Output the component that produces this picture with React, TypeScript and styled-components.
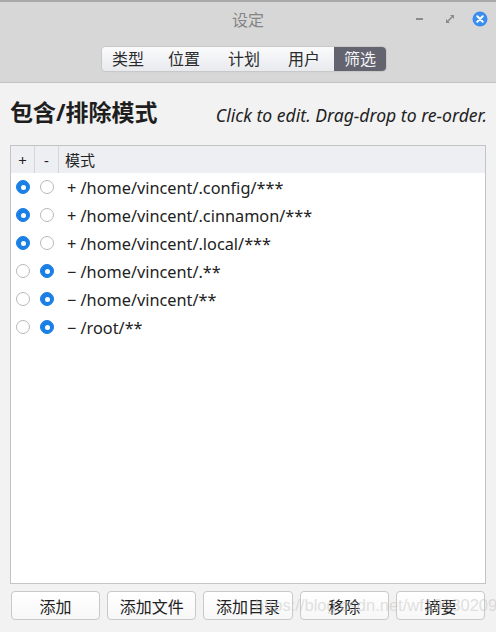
import React from "react";
import styled, { createGlobalStyle } from "styled-components";

const Global = createGlobalStyle`
  html, body { margin: 0; padding: 0; }
  body {
    width: 496px; height: 632px; overflow: hidden;
    font-family: "Noto Sans", "Noto Sans CJK SC", sans-serif;
    background: #f2f2f2;
  }
`;

const Window = styled.div`
  width: 496px; height: 632px; display: flex; flex-direction: column;
  background: #f2f2f2; position: relative; overflow: hidden;
`;

const Header = styled.div`
  background: #d7d7d7;
  border-top: 2px solid #a9a9a9;
  border-bottom: 1px solid #c4c4c4;
  display: flex; flex-direction: column;
`;

const TitleBar = styled.div`
  height: 34px; display: grid; grid-template-columns: 1fr auto 1fr; align-items: center;
`;

const Title = styled.div`
  grid-column: 2; font-size: 16px; color: #858585; margin-top: -1px;
`;

const Controls = styled.div`
  grid-column: 3; justify-self: end; display: flex; align-items: center; gap: 14px; padding-right: 8px;
`;

const CtrlBtn = styled.span`
  width: 16px; height: 16px; display: flex; align-items: center; justify-content: center;
`;

const ToolRow = styled.div`
  height: 46px; display: flex; justify-content: center; align-items: flex-start; padding-top: 11px;
  padding-right: 8px; box-sizing: border-box;
`;

const Segmented = styled.div`
  display: flex; height: 24px; border-radius: 4px; overflow: hidden;
  background: linear-gradient(#fbfbfc, #e8eaee);
  box-shadow: 0 0 0 1px #c8c8c8, 0 1px 1px rgba(0,0,0,0.08);
`;

const Seg = styled.div<{ $active?: boolean; $w: number }>`
  width: ${(p) => p.$w}px; display: flex; align-items: center; justify-content: center;
  font-size: 16px; line-height: 1;
  color: ${(p) => (p.$active ? "#f4f4f6" : "#2b2b2b")};
  background: ${(p) => (p.$active ? "#636470" : "transparent")};
`;

const Content = styled.div`
  flex: 1; display: flex; flex-direction: column; padding: 0 10px 0 10px; min-height: 0;
`;

const HeadRow = styled.div`
  height: 62px; display: flex; align-items: center; justify-content: space-between;
`;

const H1 = styled.div`
  font-size: 23px; font-weight: 700; color: #1e1e1e; margin-top: -6px;
`;

const Hint = styled.div`
  font-style: italic; font-size: 17.6px; color: #222; margin-top: 2px; margin-right: -1px;
`;

const Table = styled.div`
  flex: 1; border: 1px solid #c4c4c4; background: #fff; display: flex; flex-direction: column;
`;

const THead = styled.div`
  display: grid; grid-template-columns: 24px 24px 1fr; height: 27px; background: #eeeff3;
`;

const TH = styled.div<{ $center?: boolean; $sep?: boolean }>`
  display: flex; align-items: center; justify-content: ${(p) => (p.$center ? "center" : "flex-start")};
  padding-left: ${(p) => (p.$center ? 0 : 6)}px;
  border-right: ${(p) => (p.$sep ? "1px solid #d6d6d8" : "none")};
  font-size: 15px; color: #222;
`;

const Row = styled.div`
  display: grid; grid-template-columns: 24px 24px 1fr; height: 28px; align-items: center;
`;

const RadioCell = styled.div`
  display: flex; justify-content: center; align-items: center;
`;

const Radio = styled.span<{ $on?: boolean }>`
  width: 14px; height: 14px; border-radius: 50%; box-sizing: border-box; position: relative;
  background: ${(p) => (p.$on ? "#1a7fe6" : "#fff")};
  border: 1px solid ${(p) => (p.$on ? "#1a7fe6" : "#b9b9b9")};
  &::after {
    content: ""; display: ${(p) => (p.$on ? "block" : "none")};
    position: absolute; left: 50%; top: 50%; width: 5px; height: 5px; margin: -2.5px 0 0 -2.5px;
    border-radius: 50%; background: #fff;
  }
`;

const Pattern = styled.div`
  font-size: 16.3px; color: #222; padding-left: 8px; white-space: nowrap; margin-top: 1px;
`;

const Buttons = styled.div`
  height: 48px; display: flex; gap: 7px; align-items: flex-start; padding: 7px 1px 0; box-sizing: border-box;
`;

const Btn = styled.div`
  flex: 1; height: 29px; box-sizing: border-box; border: 1px solid #c9c9c9; border-radius: 4px;
  background: linear-gradient(#ffffff, #f7f7f7);
  display: flex; align-items: center; justify-content: center; font-size: 16px; color: #222;
`;

const Watermark = styled.div`
  position: absolute; left: 255px; top: 596px; font-family: "Liberation Sans", sans-serif;
  font-size: 16.5px; color: rgba(195,195,195,0.5); pointer-events: none; white-space: nowrap;
`;

const rows: { plus: boolean; text: string }[] = [
  { plus: true, text: "+ /home/vincent/.config/***" },
  { plus: true, text: "+ /home/vincent/.cinnamon/***" },
  { plus: true, text: "+ /home/vincent/.local/***" },
  { plus: false, text: "\u2212 /home/vincent/.**" },
  { plus: false, text: "\u2212 /home/vincent/**" },
  { plus: false, text: "\u2212 /root/**" },
];

export default function App() {
  return (
    <Window>
      <Global />
      <Header>
        <TitleBar>
          <Title>设定</Title>
          <Controls>
            <CtrlBtn>
              <svg width="10" height="4" viewBox="0 0 10 4"><rect x="1" y="1" width="7" height="2" fill="#8a8a8a" /></svg>
            </CtrlBtn>
            <CtrlBtn>
              <svg width="10" height="10" viewBox="0 0 10 10">
                <path d="M5 1h4v4z" fill="#8a8a8a" />
                <path d="M1 5v4h4z" fill="#8a8a8a" />
                <path d="M3 7l4-4" stroke="#8a8a8a" strokeWidth="1.6" />
              </svg>
            </CtrlBtn>
            <CtrlBtn>
              <svg width="16" height="16" viewBox="0 0 16 16">
                <circle cx="8" cy="8" r="7.5" fill="#3b8ef0" />
                <path d="M5.3 5.3l5.4 5.4M10.7 5.3l-5.4 5.4" stroke="#fff" strokeWidth="2" strokeLinecap="round" />
              </svg>
            </CtrlBtn>
          </Controls>
        </TitleBar>
        <ToolRow>
          <Segmented>
            <Seg $w={52}>类型</Seg>
            <Seg $w={60}>位置</Seg>
            <Seg $w={60}>计划</Seg>
            <Seg $w={60}>用户</Seg>
            <Seg $w={52} $active>筛选</Seg>
          </Segmented>
        </ToolRow>
      </Header>
      <Content>
        <HeadRow>
          <H1>包含/排除模式</H1>
          <Hint>Click to edit. Drag-drop to re-order.</Hint>
        </HeadRow>
        <Table>
          <THead>
            <TH $center $sep>+</TH>
            <TH $center $sep>-</TH>
            <TH>模式</TH>
          </THead>
          {rows.map((r, i) => (
            <Row key={i}>
              <RadioCell><Radio $on={r.plus} /></RadioCell>
              <RadioCell><Radio $on={!r.plus} /></RadioCell>
              <Pattern>{r.text}</Pattern>
            </Row>
          ))}
        </Table>
        <Buttons>
          <Btn>添加</Btn>
          <Btn>添加文件</Btn>
          <Btn>添加目录</Btn>
          <Btn>移除</Btn>
          <Btn>摘要</Btn>
        </Buttons>
      </Content>
      <Watermark>https://blog.csdn.net/wf19930209</Watermark>
    </Window>
  );
}
